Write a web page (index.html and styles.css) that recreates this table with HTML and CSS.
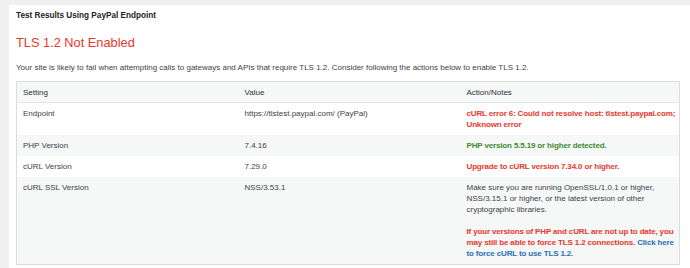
FILE: index.html
```html
<!DOCTYPE html>
<html>
<head>
<meta charset="utf-8">
<link rel="stylesheet" href="styles.css">
</head>
<body>
<div class="panel">
  <h2 class="panel-title">Test Results Using PayPal Endpoint</h2>
  <h1 class="status">TLS 1.2 Not Enabled</h1>
  <p class="intro">Your site is likely to fail when attempting calls to gateways and APIs that require TLS 1.2. Consider following the actions below to enable TLS 1.2.</p>
  <table class="results">
    <colgroup><col class="c-setting"><col class="c-value"><col></colgroup>
    <thead>
      <tr><th>Setting</th><th>Value</th><th>Action/Notes</th></tr>
    </thead>
    <tbody>
      <tr><td>Endpoint</td><td>https://tlstest.paypal.com/ (PayPal)</td><td class="bad">cURL error 6: Could not resolve host: tlstest.paypal.com; Unknown error</td></tr>
      <tr class="alt"><td>PHP Version</td><td>7.4.16</td><td class="good">PHP version 5.5.19 or higher detected.</td></tr>
      <tr><td>cURL Version</td><td>7.29.0</td><td class="bad">Upgrade to cURL version 7.34.0 or higher.</td></tr>
      <tr class="alt"><td>cURL SSL Version</td><td>NSS/3.53.1</td><td><span class="note">Make sure you are running OpenSSL/1.0.1 or higher, NSS/3.15.1 or higher, or the latest version of other cryptographic libraries.</span><span class="bad block">If your versions of PHP and cURL are not up to date, you may still be able to force TLS 1.2 connections. <a href="#" class="link">Click here to force cURL to use TLS 1.2</a>.</span></td></tr>
    </tbody>
  </table>
</div>
</body>
</html>
```
FILE: styles.css
```css
html, body {
  margin: 0;
  padding: 0;
  background: #f0f0f1;
  height: 100%;
  overflow: hidden;
}
body {
  font-family: "Liberation Sans", Arial, sans-serif;
  color: #3c434a;
}
.panel {
  margin: 5px 0 0 9px;
  background: #fff;
  padding: 0 10px 0 7px;
  min-height: 300px;
}
.panel-title {
  margin: 0;
  padding-top: 5px;
  font-size: 8.2px;
  line-height: 12px;
  font-weight: bold;
  color: #1d2327;
}
.status {
  margin: 13px 0 0;
  font-size: 12.8px;
  line-height: 16px;
  font-weight: normal;
  color: #e8372c;
}
.intro {
  margin: 11px 0 0;
  font-size: 8px;
  line-height: 11px;
}
.results {
  margin-top: 8px;
  width: 664px;
  border: 1px solid #dcdcde;
  border-collapse: collapse;
  table-layout: fixed;
  font-size: 8px;
  line-height: 11px;
}
.c-setting, .c-value {
  width: 222px;
}
.results th {
  text-align: left;
  font-weight: normal;
  color: #2c3338;
  background: #f6f7f7;
  border-bottom: 1px solid #e6e6e8;
  padding: 5px 6px 4px;
}
.results td {
  vertical-align: top;
  padding: 5px 6px;
}
.results td:last-child {
  padding-right: 1px;
}
.results tr.alt td {
  background: #f6f7f7;
}
.bad {
  color: #e8372c;
  font-weight: bold;
  letter-spacing: -0.15px;
}
.good {
  color: #3d8b2f;
  font-weight: bold;
  letter-spacing: -0.15px;
}
.block {
  display: block;
  margin-top: 11px;
}
.link {
  color: #2a6fb5;
  text-decoration: none;
}
```
